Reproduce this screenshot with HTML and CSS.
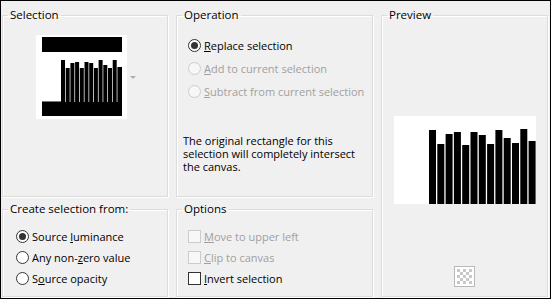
FILE: index.html
```html
<!DOCTYPE html>
<html lang="en">
<head>
  <meta charset="utf-8" />
  <title>Selection From Mask</title>
  <link rel="stylesheet" href="styles.css">
</head>
<body>
  <div class="dialog">
    <fieldset class="group group-selection">
      <legend>Selection</legend>
      <div class="thumb-row">
        <svg class="thumb" width="91" height="84" viewBox="0 0 91 84">
          <rect width="91" height="84" fill="#fff" />
          <rect x="6" y="2" width="80" height="15" fill="#000" />
          <rect x="6" y="67" width="80" height="14" fill="#000" />
          <rect x="6" y="66" width="19" height="1" fill="#777" />
          <g fill="#000">
            <rect x="25" y="25" width="4" height="42" />
            <rect x="29.7" y="33" width="4" height="34" />
            <rect x="34.4" y="28" width="4" height="39" />
            <rect x="39.1" y="27" width="4" height="40" />
            <rect x="43.8" y="33" width="4" height="34" />
            <rect x="48.5" y="27" width="4" height="40" />
            <rect x="53.2" y="28" width="4" height="39" />
            <rect x="57.9" y="33" width="4" height="34" />
            <rect x="62.6" y="25" width="4" height="42" />
            <rect x="67.3" y="30" width="4" height="37" />
            <rect x="72" y="33" width="4" height="34" />
            <rect x="76.7" y="25" width="4" height="42" />
            <rect x="81.4" y="32" width="4.6" height="35" />
          </g>
        </svg>
        <span class="drop-arrow"></span>
      </div>
    </fieldset>

    <fieldset class="group group-operation">
      <legend>Operation</legend>
      <div class="choices">
        <label class="choice"><span class="radio checked"></span><span><u>R</u>eplace selection</span></label>
        <label class="choice disabled"><span class="radio"></span><span><u>A</u>dd to current selection</span></label>
        <label class="choice disabled"><span class="radio"></span><span><u>S</u>ubtract from current selection</span></label>
      </div>
      <p class="note">The original rectangle for this selection will completely intersect the canvas.</p>
    </fieldset>

    <fieldset class="group group-preview">
      <legend>Preview</legend>
      <svg class="preview" width="142" height="88" viewBox="0 0 142 88">
        <rect width="142" height="88" fill="#fff" />
        <g fill="#000">
          <rect x="35" y="14" width="7" height="74" />
          <rect x="43.3" y="28" width="7" height="60" />
          <rect x="51.6" y="18" width="7" height="70" />
          <rect x="59.9" y="16" width="7" height="72" />
          <rect x="68.2" y="29" width="7" height="59" />
          <rect x="76.5" y="16" width="7" height="72" />
          <rect x="84.8" y="19" width="7" height="69" />
          <rect x="93.1" y="28" width="7" height="60" />
          <rect x="101.4" y="14" width="7" height="74" />
          <rect x="109.7" y="22" width="7" height="66" />
          <rect x="118" y="27" width="7" height="61" />
          <rect x="126.3" y="13" width="7" height="75" />
          <rect x="134.6" y="25" width="7" height="63" />
        </g>
      </svg>
      <svg class="checker" width="21" height="21" viewBox="0 0 21 21">
        <rect x="0.5" y="0.5" width="20" height="20" fill="#fff" stroke="#b9b9b9" />
        <g fill="#c8c8c8">
          <rect x="3" y="3" width="3" height="3" /><rect x="9" y="3" width="3" height="3" /><rect x="15" y="3" width="3" height="3" />
          <rect x="6" y="6" width="3" height="3" /><rect x="12" y="6" width="3" height="3" />
          <rect x="3" y="9" width="3" height="3" /><rect x="9" y="9" width="3" height="3" /><rect x="15" y="9" width="3" height="3" />
          <rect x="6" y="12" width="3" height="3" /><rect x="12" y="12" width="3" height="3" />
          <rect x="3" y="15" width="3" height="3" /><rect x="9" y="15" width="3" height="3" /><rect x="15" y="15" width="3" height="3" />
        </g>
      </svg>
    </fieldset>

    <fieldset class="group group-source">
      <legend>Create selection from:</legend>
      <div class="choices compact">
        <label class="choice"><span class="radio checked"></span><span>Source <u>l</u>uminance</span></label>
        <label class="choice"><span class="radio"></span><span>Any non-<u>z</u>ero value</span></label>
        <label class="choice"><span class="radio"></span><span>S<u>o</u>urce opacity</span></label>
      </div>
    </fieldset>

    <fieldset class="group group-options">
      <legend>Options</legend>
      <div class="choices compact">
        <label class="choice disabled"><span class="check"></span><span><u>M</u>ove to upper left</span></label>
        <label class="choice disabled"><span class="check"></span><span><u>C</u>lip to canvas</span></label>
        <label class="choice"><span class="check"></span><span><u>I</u>nvert selection</span></label>
      </div>
    </fieldset>
  </div>
</body>
</html>
```

FILE: styles.css
```css
body {
  margin: 0;
  font-family: 'Segoe UI', 'Open Sans', 'Noto Sans', sans-serif;
  font-size: 11px;
  color: #000;
  background-color: #f0f0f0;
}

.dialog {
  width: 551px;
  height: 299px;
  box-sizing: border-box;
  border: 1px solid #000;
  background-color: #f0f0f0;
  padding: 6px 2px 1px 1px;
  display: grid;
  grid-template-columns: 166px 197px 167px;
  grid-template-rows: 190px 96px;
  column-gap: 8px;
  row-gap: 4px;
}

.group {
  margin: 0;
  padding: 0;
  min-width: 0;
  border: 1px solid #dcdcdc;
  box-shadow: inset 1px 1px 0 #fff, 1px 1px 0 #fff;
}

.group legend {
  margin-left: 5px;
  padding: 0 2px;
  line-height: 16px;
  height: 16px;
  font-size: 11.5px;
}

.group-selection {
  grid-column: 1;
  grid-row: 1;
}

.group-operation {
  grid-column: 2;
  grid-row: 1;
}

.group-preview {
  grid-column: 3;
  grid-row: 1 / span 2;
  display: flex;
  flex-direction: column;
  align-items: center;
}

.group-source {
  grid-column: 1;
  grid-row: 2;
}

.group-options {
  grid-column: 2;
  grid-row: 2;
}

.thumb-row {
  display: flex;
  align-items: center;
  padding: 12px 0 0 33px;
}

.thumb {
  display: block;
}

.drop-arrow {
  width: 0;
  height: 0;
  margin-left: 3px;
  border-left: 3px solid transparent;
  border-right: 3px solid transparent;
  border-top: 3px solid #b0b0b0;
}

.choices {
  display: flex;
  flex-direction: column;
  padding: 11px 0 0 11px;
}

.choices.compact {
  padding-top: 9px;
}

.choice {
  display: flex;
  align-items: center;
  height: 23px;
  white-space: nowrap;
}

.compact .choice {
  height: 21px;
}

.group-source .choices {
  padding-left: 13px;
}

.radio,
.check {
  width: 13px;
  height: 13px;
  box-sizing: border-box;
  border: 1px solid #333;
  background-color: #fff;
  margin-right: 3px;
  flex-shrink: 0;
}

.radio {
  border-radius: 50%;
  display: flex;
  align-items: center;
  justify-content: center;
}

.radio.checked::after {
  content: "";
  width: 7px;
  height: 7px;
  border-radius: 50%;
  background-color: #333;
}

.choice.disabled {
  color: #a0a0a0;
}

.choice.disabled .radio,
.choice.disabled .check {
  border-color: #cccccc;
  background-color: #f7f7f7;
}

.note {
  margin: 31px 0 0 6px;
  line-height: 13px;
  width: 178px;
}

.preview {
  display: block;
  margin-top: 93px;
}

.checker {
  display: block;
  margin-top: 62px;
}
```
